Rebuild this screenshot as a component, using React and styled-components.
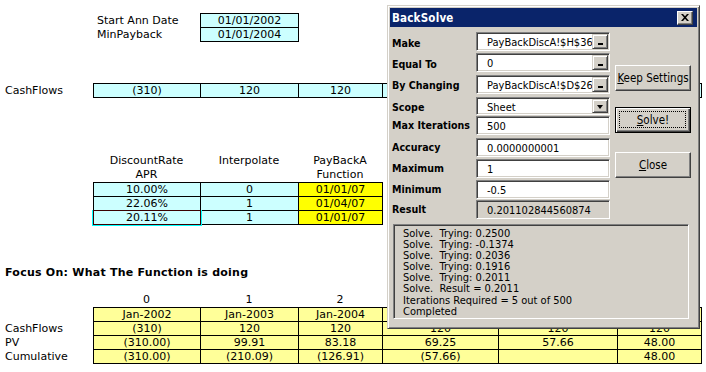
import React from 'react';
import styled, { createGlobalStyle, css } from 'styled-components';

const GlobalStyle = createGlobalStyle`
  html, body { margin: 0; padding: 0; background: #fff; }
  body {
    width: 706px; height: 372px; overflow: hidden;
    font-family: "DejaVu Sans", Verdana, sans-serif;
    font-size: 11px; color: #000;
  }
  #root { position: relative; width: 706px; height: 372px; }
`;

const CELL_COLS = [106, 97, 83, 115, 118, 83];
const SPAN_COLS = [107, 98, 84, 116, 119, 84];

const CYAN = '#CCFFFF';
const YELLOW = '#FFFF00';
const PALE = '#FFFF99';

/* ---------- sheet ---------- */
const Sheet = styled.div`
  display: flex;
  flex-direction: column;
  padding-top: 13px;
  width: 706px;
`;

const Block = styled.div`
  display: grid;
  grid-template-columns: ${p => p.$cols};
  margin-top: ${p => p.$mt || 0}px;
  align-items: start;
`;

const Labels = styled.div`
  display: flex;
  flex-direction: column;
  padding-top: 1px;
`;

const RowLabel = styled.div`
  height: 14px;
  line-height: 13px;
  padding-left: ${p => p.$indent}px;
  white-space: nowrap;
`;

const Strip = styled.div`
  display: grid;
  grid-template-columns: ${p => p.$cols.map(c => c + 'px').join(' ')};
  grid-auto-rows: 13px;
  gap: 1px;
  padding: 1px;
  background: #000;
  width: max-content;
`;

const Cell = styled.div`
  background: ${p => p.$bg};
  text-align: center;
  line-height: 13px;
  white-space: nowrap;
  ${p => p.$selected && css`
    position: relative;
    z-index: 1;
    &::after {
      content: '';
      position: absolute;
      inset: -1px;
      border: 1px solid #3a0000;
      box-shadow: -1px 0 0 #00ffff, 1px 0 0 #00ffff, 0 1px 0 #00ffff,
        -1px 1px 0 #00ffff, 1px 1px 0 #00ffff;
    }
  `}
`;

const HeadGrid = styled.div`
  display: grid;
  grid-template-columns: 93px ${SPAN_COLS.map(c => c + 'px').join(' ')};
  margin-top: ${p => p.$mt || 0}px;
`;

const HeadCell = styled.div`
  text-align: center;
  line-height: 14px;
  white-space: nowrap;
`;

const Heading = styled.div`
  margin-top: ${p => p.$mt}px;
  padding-left: 5px;
  height: 14px;
  line-height: 14px;
  font-weight: bold;
  letter-spacing: 0.25px;
  white-space: nowrap;
`;

/* ---------- dialog ---------- */
const Dialog = styled.div`
  position: absolute;
  left: 387px;
  top: 5px;
  width: 313px;
  height: 324px;
  box-sizing: border-box;
  background: #D4D0C8;
  border: 1px solid;
  border-color: #D4D0C8 #404040 #404040 #D4D0C8;
  box-shadow: inset 1px 1px 0 #fff, inset -1px -1px 0 #808080;
  padding: 2px;
  display: flex;
  flex-direction: column;
  font-family: "DejaVu Sans Condensed", "DejaVu Sans", sans-serif;
  font-size: 11px;
  color: #000;
`;

const TitleBar = styled.div`
  height: 19px;
  background: #0A246A;
  display: flex;
  align-items: center;
  justify-content: space-between;
  padding: 0 4px 0 2px;
`;

const Title = styled.span`
  color: #fff;
  font-weight: bold;
  font-size: 11.5px;
  letter-spacing: 0.2px;
`;

const CloseBox = styled.div`
  width: 16px;
  height: 14px;
  box-sizing: border-box;
  background: #D4D0C8;
  border: 1px solid;
  border-color: #fff #404040 #404040 #fff;
  box-shadow: inset -1px -1px 0 #808080;
  display: flex;
  align-items: center;
  justify-content: center;
`;

const Body = styled.div`
  display: flex;
  flex-direction: column;
  padding: 5px 0 0 2px;
`;

const TopArea = styled.div`
  display: flex;
  align-items: flex-start;
`;

const Form = styled.div`
  display: grid;
  grid-template-columns: 84px 134px;
  grid-template-rows: 21px 22px 22px 19px 22px 21px 21px 20px 19px;
  align-items: start;
`;

const FieldLabel = styled.div`
  font-weight: bold;
  font-size: 10.6px;
  line-height: 19px;
  padding-top: ${p => p.$dy || 0}px;
  white-space: nowrap;
`;

const Field = styled.div`
  display: flex;
  height: ${p => p.$h || 19}px;
  box-sizing: border-box;
  border: 1px solid;
  border-color: #808080 #fff #fff #808080;
  box-shadow: inset 1px 1px 0 #404040, inset -1px -1px 0 #D4D0C8;
  background: ${p => (p.$disabled ? '#D4D0C8' : '#fff')};
  padding: 1px;
`;

const FieldText = styled.div`
  flex: 1;
  padding: 1px 0 0 9px;
  line-height: 15px;
  white-space: nowrap;
  overflow: hidden;
`;

const FieldButton = styled.div`
  width: 16px;
  box-sizing: border-box;
  background: #D4D0C8;
  border: 1px solid;
  border-color: #D4D0C8 #404040 #404040 #D4D0C8;
  box-shadow: inset 1px 1px 0 #fff, inset -1px -1px 0 #808080;
  display: flex;
  justify-content: center;
  align-items: ${p => (p.$arrow ? 'center' : 'flex-end')};
  padding-bottom: ${p => (p.$arrow ? 0 : 3)}px;
`;

const Dash = styled.div`
  width: 5px;
  height: 2px;
  background: #000;
  margin-left: 1px;
`;

const Arrow = styled.div`
  width: 0;
  height: 0;
  border-left: 3.5px solid transparent;
  border-right: 3.5px solid transparent;
  border-top: 4px solid #000;
  margin-top: 1px;
`;

const ButtonCol = styled.div`
  display: flex;
  flex-direction: column;
  margin-left: 5px;
  padding-top: 33px;
`;

const PushButton = styled.div`
  width: 76px;
  height: 26px;
  box-sizing: border-box;
  margin-top: ${p => p.$mt || 0}px;
  background: #D4D0C8;
  border: 1px solid;
  border-color: #fff #404040 #404040 #fff;
  box-shadow: inset -1px -1px 0 #808080;
  display: flex;
  align-items: center;
  justify-content: center;
  font-size: 11.5px;
  position: relative;
  ${p => p.$default && css`
    border: 1px solid #000;
    box-shadow: inset 1px 1px 0 #fff, inset -1px -1px 0 #404040, inset -2px -2px 0 #808080;
    &::after {
      content: '';
      position: absolute;
      inset: 3px 4px 4px 3px;
      border: 1px dotted #000;
    }
  `}
`;

const LogBox = styled.div`
  margin: 5px 0 0 1px;
  width: 296px;
  height: 95px;
  box-sizing: border-box;
  border: 1px solid;
  border-color: #808080 #fff #fff #808080;
  box-shadow: inset 1px 1px 0 #404040, inset -1px -1px 0 #D4D0C8;
  padding: 3px 9px;
  font-family: "Liberation Sans Narrow", "DejaVu Sans Condensed", sans-serif;
  font-size: 11px;
  line-height: 11.1px;
`;

const LogLine = styled.div`
  white-space: pre;
`;

const fields = [
  { label: 'Make', value: 'PayBackDiscA!$H$36', btn: 'dash', dy: 2 },
  { label: 'Equal To', value: '0', btn: 'dash', dy: 2 },
  { label: 'By Changing', value: 'PayBackDiscA!$D$26', btn: 'dash', dy: 1 },
  { label: 'Scope', value: 'Sheet', btn: 'arrow', dy: 1, h: 18 },
  { label: 'Max Iterations', value: '500' },
  { label: 'Accuracy', value: '0.0000000001' },
  { label: 'Maximum', value: '1' },
  { label: 'Minimum', value: '-0.5' },
  { label: 'Result', value: '0.201102844560874', disabled: true },
];

const logLines = [
  'Solve.  Trying: 0.2500',
  'Solve.  Trying: -0.1374',
  'Solve.  Trying: 0.2036',
  'Solve.  Trying: 0.1916',
  'Solve.  Trying: 0.2011',
  'Solve.  Result = 0.2011',
  'Iterations Required = 5 out of 500',
  'Completed',
];

/* cells lying under the dialog are left blank: they are hidden in the picture */
const bottomRows = [
  { label: '', cells: ['Jan-2002', 'Jan-2003', 'Jan-2004', '', '', ''] },
  { label: 'CashFlows', cells: ['(310)', '120', '120', '120', '120', '120'] },
  { label: 'PV', cells: ['(310.00)', '99.91', '83.18', '69.25', '57.66', '48.00'] },
  { label: 'Cumulative', cells: ['(310.00)', '(210.09)', '(126.91)', '(57.66)', '', '48.00'] },
];

export default function App() {
  return (
    <>
      <GlobalStyle />
      <Sheet>
        <Block $cols="93px 107px auto">
          <div />
          <Labels>
            <RowLabel $indent={4}>Start Ann Date</RowLabel>
            <RowLabel $indent={4}>MinPayback</RowLabel>
          </Labels>
          <Strip $cols={[97]}>
            <Cell $bg={CYAN}>01/01/2002</Cell>
            <Cell $bg={CYAN}>01/01/2004</Cell>
          </Strip>
        </Block>

        <Block $cols="93px auto" $mt={41}>
          <Labels>
            <RowLabel $indent={5}>CashFlows</RowLabel>
          </Labels>
          <Strip $cols={CELL_COLS}>
            {['(310)', '120', '120', '', '', ''].map((v, i) => (
              <Cell key={i} $bg={CYAN}>{v}</Cell>
            ))}
          </Strip>
        </Block>

        <HeadGrid $mt={56}>
          <div />
          <HeadCell>DiscountRate<br />APR</HeadCell>
          <HeadCell>Interpolate</HeadCell>
          <HeadCell>PayBackA<br />Function</HeadCell>
        </HeadGrid>

        <Block $cols="93px auto">
          <div />
          <Strip $cols={CELL_COLS.slice(0, 3)}>
            <Cell $bg={CYAN}>10.00%</Cell>
            <Cell $bg={CYAN}>0</Cell>
            <Cell $bg={YELLOW}>01/01/07</Cell>
            <Cell $bg={CYAN}>22.06%</Cell>
            <Cell $bg={CYAN}>1</Cell>
            <Cell $bg={YELLOW}>01/04/07</Cell>
            <Cell $bg={CYAN} $selected>20.11%</Cell>
            <Cell $bg={CYAN}>1</Cell>
            <Cell $bg={YELLOW}>01/01/07</Cell>
          </Strip>
        </Block>

        <Heading $mt={41}>Focus On: What The Function is doing</Heading>

        <HeadGrid $mt={13}>
          <div />
          {['0', '1', '2', '', '', ''].map((n, i) => (
            <HeadCell key={i}>{n}</HeadCell>
          ))}
        </HeadGrid>

        <Block $cols="93px auto">
          <Labels>
            {bottomRows.map((r, i) => (
              <RowLabel key={i} $indent={5}>{r.label}</RowLabel>
            ))}
          </Labels>
          <Strip $cols={CELL_COLS}>
            {bottomRows.map((r, i) =>
              r.cells.map((v, j) => (
                <Cell key={i + '-' + j} $bg={PALE}>{v}</Cell>
              ))
            )}
          </Strip>
        </Block>
      </Sheet>

      <Dialog>
        <TitleBar>
          <Title>BackSolve</Title>
          <CloseBox>
            <svg width="8" height="7" viewBox="0 0 8 7">
              <path d="M0 0h2l2 2.3L6 0h2L5 3.5 8 7H6L4 4.7 2 7H0l3-3.5z" fill="#000" />
            </svg>
          </CloseBox>
        </TitleBar>
        <Body>
          <TopArea>
            <Form>
              {fields.map(f => (
                <React.Fragment key={f.label}>
                  <FieldLabel $dy={f.dy}>{f.label}</FieldLabel>
                  <Field $disabled={f.disabled} $h={f.h}>
                    <FieldText>{f.value}</FieldText>
                    {f.btn && (
                      <FieldButton $arrow={f.btn === 'arrow'}>
                        {f.btn === 'arrow' ? <Arrow /> : <Dash />}
                      </FieldButton>
                    )}
                  </Field>
                </React.Fragment>
              ))}
            </Form>
            <ButtonCol>
              <PushButton><span><u>K</u>eep Settings</span></PushButton>
              <PushButton $mt={16} $default><span><u>S</u>olve!</span></PushButton>
              <PushButton $mt={19}><span><u>C</u>lose</span></PushButton>
            </ButtonCol>
          </TopArea>
          <LogBox>
            {logLines.map((l, i) => (
              <LogLine key={i}>{l}</LogLine>
            ))}
          </LogBox>
        </Body>
      </Dialog>
    </>
  );
}
